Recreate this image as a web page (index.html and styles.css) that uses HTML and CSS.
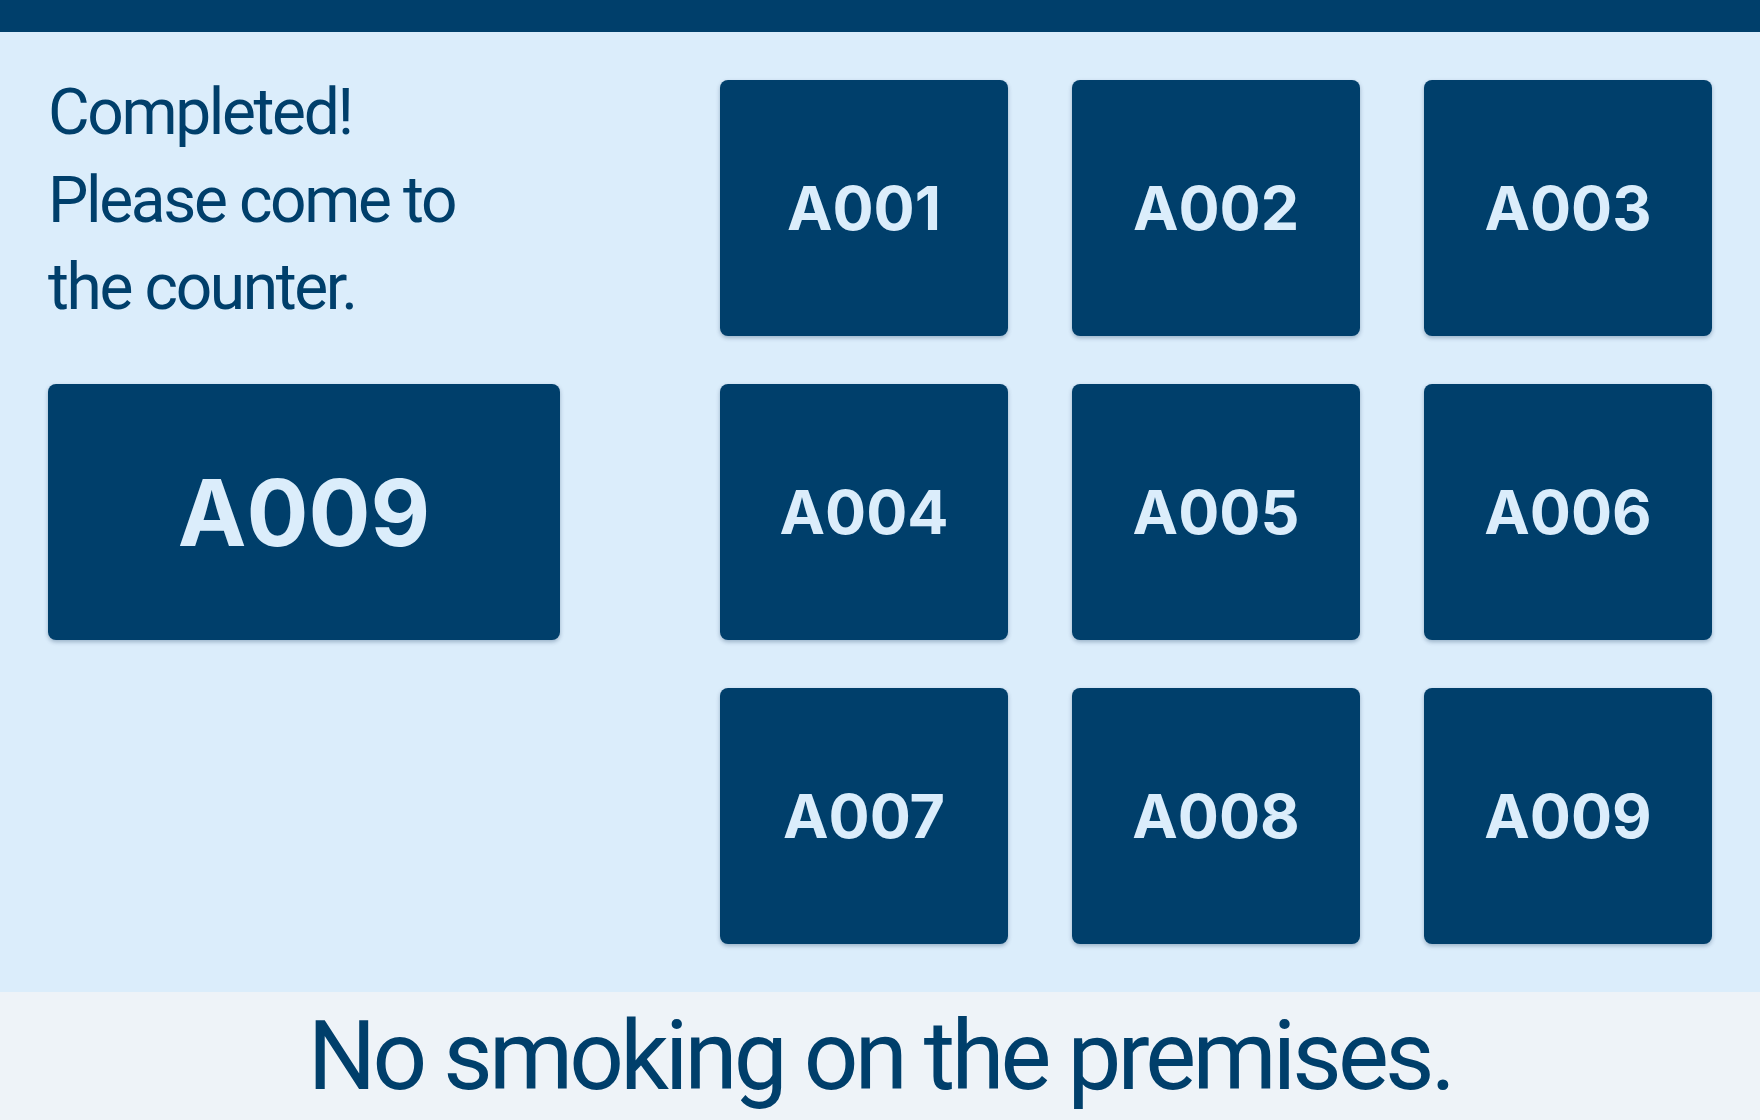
FILE: index.html
```html
<!DOCTYPE html>
<html lang="en">
<head>
    <meta charset="UTF-8">
    <meta name="viewport" content="width=device-width, initial-scale=1.0">
    <title>Pickup Display</title>
    <link rel="stylesheet" href="styles.css">
</head>
<body>
    <div class="top-bar"></div>
    <main class="board">
        <div class="current">
            <p class="message">Completed!<br>Please come to<br>the counter.</p>
            <div class="ticket ticket-big">A009</div>
        </div>
        <div class="tickets">
            <div class="ticket">A001</div>
            <div class="ticket">A002</div>
            <div class="ticket">A003</div>
            <div class="ticket">A004</div>
            <div class="ticket">A005</div>
            <div class="ticket">A006</div>
            <div class="ticket">A007</div>
            <div class="ticket">A008</div>
            <div class="ticket">A009</div>
        </div>
    </main>
    <footer class="notice">No smoking on the premises.</footer>
</body>
</html>
```
FILE: styles.css
```css
body {
    margin: 0;
    width: 1760px;
    height: 1120px;
    overflow: hidden;
    font-family: 'Roboto', 'Liberation Sans', sans-serif;
    color: #003f6b;
    background: #dbedfb;
}
.top-bar {
    height: 32px;
    background: #003f6b;
}
.board {
    height: 960px;
    box-sizing: border-box;
    padding: 48px;
    display: flex;
    gap: 160px;
}
.current {
    width: 512px;
    display: flex;
    flex-direction: column;
    gap: 48px;
}
.message {
    height: 267px;
    margin: -11px 0 0 0;
    font-size: 64px;
    line-height: 87.5px;
    letter-spacing: -0.037em;
}
.tickets {
    display: grid;
    grid-template-columns: repeat(3, 288px);
    grid-auto-rows: 256px;
    column-gap: 64px;
    row-gap: 48px;
}
.ticket {
    height: 256px;
    display: flex;
    align-items: center;
    justify-content: center;
    background: #003f6b;
    color: #dbedfb;
    border-radius: 8px;
    box-shadow: 0 2px 4px rgba(0, 40, 80, 0.3);
    font-family: 'Inter', 'Liberation Sans', sans-serif;
    font-weight: bold;
    font-size: 61px;
}
.ticket-big {
    font-size: 92px;
}
.notice {
    height: 128px;
    background: #eef3f8;
    text-align: center;
    font-size: 96px;
    line-height: 128px;
    letter-spacing: -0.04em;
}
```
